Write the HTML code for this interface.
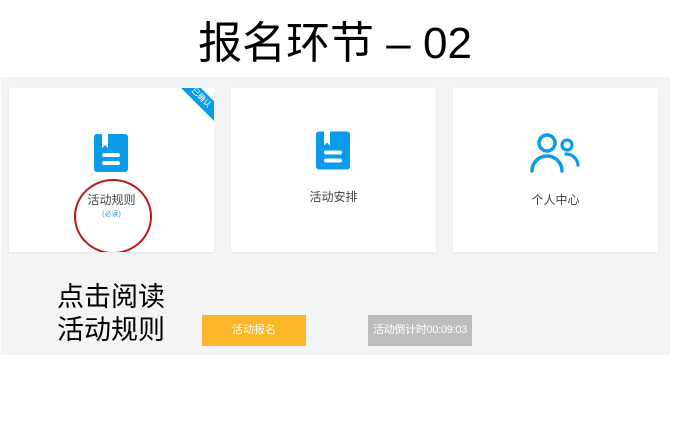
<!DOCTYPE html>
<html><head><meta charset="utf-8"><style>
body{margin:0;width:678px;height:433px;background:#fff;position:relative;overflow:hidden;font-family:"Liberation Sans","Noto Sans CJK SC",sans-serif}
.t{position:absolute;left:0;width:670px;top:16px;text-align:center;font-size:44px;line-height:56px;color:#000}
.panel{position:absolute;left:1px;top:77px;width:669px;height:278px;background:#f3f4f6}
.card{position:absolute;top:88px;width:205px;height:164px;background:#fff;box-shadow:0 1px 3px rgba(0,0,0,.06);overflow:hidden}
.lbl{position:absolute;left:0;width:100%;text-align:center;font-size:12px;color:#444}
.ic{position:absolute}
.rib{position:absolute;right:-22px;top:3px;width:70px;height:14px;background:#0a9bea;transform:rotate(45deg);color:#fff;font-size:8px;line-height:14px;text-align:center}
.big{position:absolute;left:57px;top:281px;font-size:27px;line-height:33px;color:#000}
.b1{position:absolute;left:202px;top:315px;width:104px;height:31px;background:#fdb52a;color:#fff;font-size:11px;line-height:31px;text-align:center}
.b2{position:absolute;left:368px;top:315px;width:104px;height:31px;background:#bdbdbd;color:#fff;font-size:11px;line-height:31px;text-align:center;letter-spacing:-.3px}
</style></head><body>
<div class="t">报名环节 – 02</div>
<div class="panel"></div>
<div class="card" style="left:9px">
 <div class="rib">已确认</div>
 <svg class="ic" style="left:85px;top:46px" width="34" height="38" viewBox="0 0 34 38"><path d="M3 0H31a3 3 0 0 1 3 3V35a3 3 0 0 1-3 3H3a3 3 0 0 1-3-3V3a3 3 0 0 1 3-3z" fill="#0a9bea"/><path d="M8 0V14L11 11L14 14V0z" fill="#fff"/><rect x="8" y="19" width="18" height="4" rx="2" fill="#fff"/><rect x="8" y="27" width="18" height="4" rx="2" fill="#fff"/></svg>
 <div class="lbl" style="top:103px">活动规则</div>
 <div class="lbl" style="top:121px;font-size:7px;color:#3a9be0">(必读)</div>
 <div style="position:absolute;left:65px;top:91px;width:74px;height:71px;border:2px solid #b81a1a;border-radius:50%"></div>
</div>
<div class="card" style="left:231px">
 <svg class="ic" style="left:85px;top:43px" width="34" height="39" viewBox="0 0 34 38"><path d="M3 0H31a3 3 0 0 1 3 3V35a3 3 0 0 1-3 3H3a3 3 0 0 1-3-3V3a3 3 0 0 1 3-3z" fill="#0a9bea"/><path d="M8 0V14L11 11L14 14V0z" fill="#fff"/><rect x="8" y="19" width="18" height="4" rx="2" fill="#fff"/><rect x="8" y="27" width="18" height="4" rx="2" fill="#fff"/></svg>
 <div class="lbl" style="top:100px">活动安排</div>
</div>
<div class="card" style="left:453px">
 <svg class="ic" style="left:76px;top:44px" width="54" height="42" viewBox="0 0 54 42"><circle cx="18" cy="11" r="8" fill="none" stroke="#0a9bea" stroke-width="3.5"/><path d="M3 39A15 15 0 0 1 33 39" fill="none" stroke="#0a9bea" stroke-width="3.5" stroke-linecap="round"/><circle cx="38" cy="13" r="5" fill="none" stroke="#0a9bea" stroke-width="3.2"/><path d="M37 22A12 12 0 0 1 49 33" fill="none" stroke="#0a9bea" stroke-width="3.2" stroke-linecap="round"/></svg>
 <div class="lbl" style="top:103px">个人中心</div>
</div>
<div class="big">点击阅读<br>活动规则</div>
<div class="b1">活动报名</div>
<div class="b2">活动倒计时00:09:03</div>
</body></html>
